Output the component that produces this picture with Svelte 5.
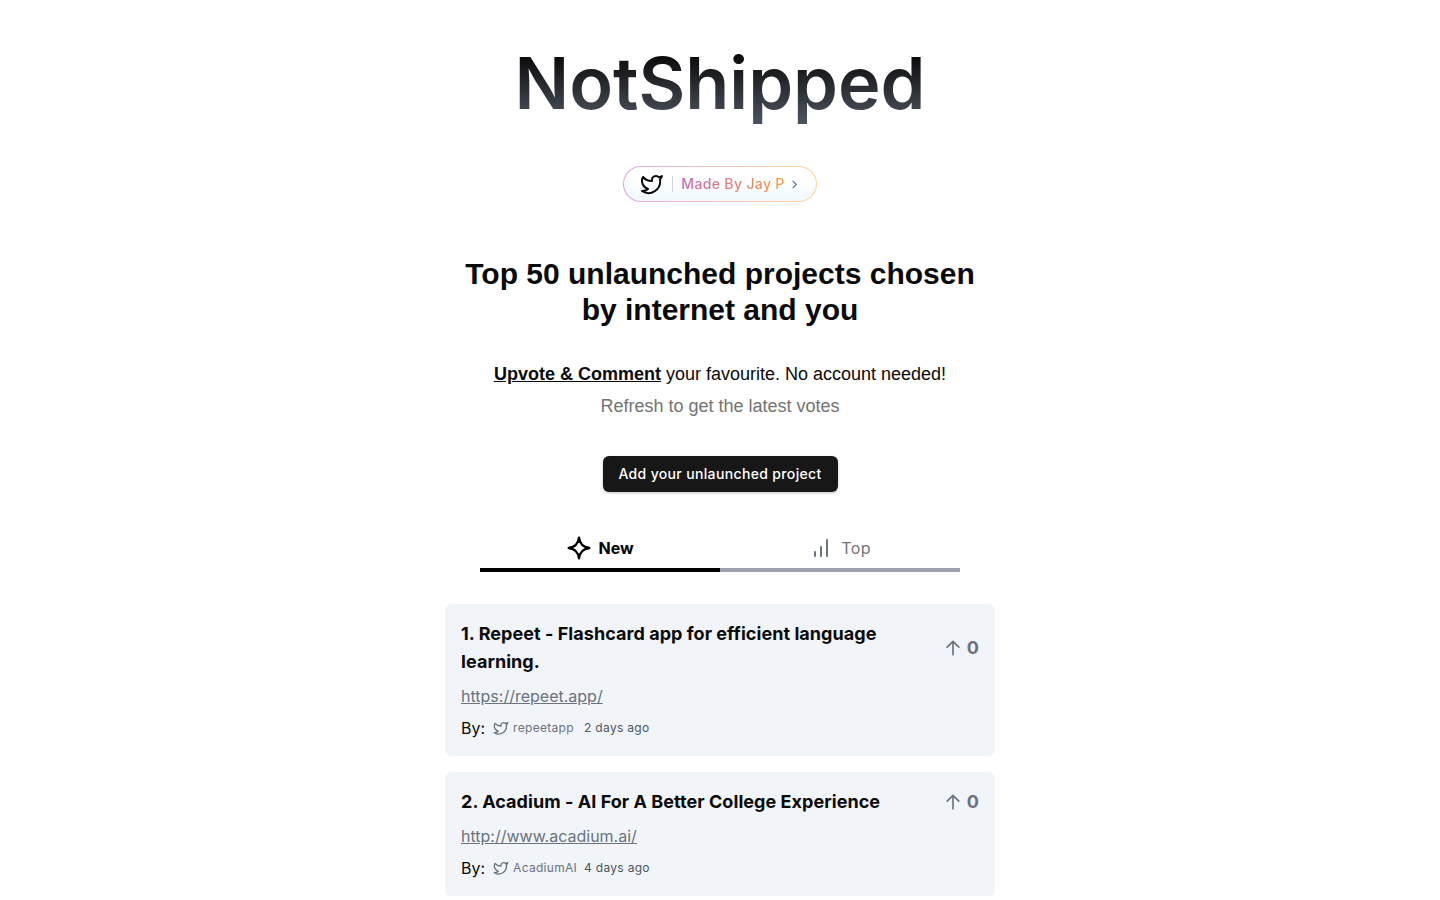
<script lang="ts">
	const projects = [
		{ rank: 1, title: 'Repeet - Flashcard app for efficient language learning.', url: 'https://repeet.app/', by: 'repeetapp', when: '2 days ago', votes: 0 },
		{ rank: 2, title: 'Acadium - AI For A Better College Experience', url: 'http://www.acadium.ai/', by: 'AcadiumAI', when: '4 days ago', votes: 0 }
	];
	const twitter = 'M22 4s-.7 2.1-2 3.4c1.6 10-9.4 17.3-18 11.6 2.2.1 4.4-.6 6-2C3 15.5.5 9.6 3 5c2.2 2.6 5.6 4.1 9 4-.9-4.2 4-6.6 7-3.8 1.1 0 3-1.2 3-1.2z';
</script>

<main class="page">
	<h1 class="title">NotShipped</h1>

	<a class="maker" href="#maker">
		<svg class="maker-bird" viewBox="0 0 24 24" width="24" height="24" aria-hidden="true"><path d={twitter} /></svg>
		<span class="maker-sep"></span>
		<span class="maker-text">Made By Jay P</span>
		<svg class="maker-chevron" viewBox="3 3 18 18" width="11" height="11" aria-hidden="true"><path d="m9 6 6 6-6 6" /></svg>
	</a>

	<h2 class="headline">Top 50 unlaunched projects chosen by internet and you</h2>

	<p class="lead"><a href="#comment">Upvote &amp; Comment</a> your favourite. No account needed!</p>
	<p class="sub">Refresh to get the latest votes</p>

	<button class="add" type="button">Add your unlaunched project</button>

	<div class="tabs">
		<button class="tab active" type="button">
			<svg viewBox="0 0 24 24" width="26" height="26" aria-hidden="true"><path d="M12 2.500c.9 6 3.500 8.600 9.500 9.500-6 .9-8.600 3.500-9.500 9.500-.9-6-3.500-8.600-9.500-9.500 6-.9 8.600-3.500 9.500-9.500z" /></svg>
			New
		</button>
		<button class="tab" type="button">
			<svg viewBox="0 0 24 24" width="24" height="24" aria-hidden="true"><path d="M18 20V4M12 20v-9M6 20v-4" /></svg>
			Top
		</button>
	</div>

	<ul class="list">
		{#each projects as p}
			<li class="card">
				<div class="card-top">
					<h3>{p.rank}. {p.title}</h3>
					<button class="vote" type="button">
						<svg viewBox="0 0 24 24" width="20" height="20" aria-hidden="true"><path d="M12 20V4M5 11l7-7 7 7" /></svg>
						{p.votes}
					</button>
				</div>
				<a class="url" href={p.url}>{p.url}</a>
				<div class="meta">
					<span class="by">By:</span>
					<svg class="meta-bird" viewBox="0 0 24 24" width="16" height="16" aria-hidden="true"><path d={twitter} /></svg>
					<span class="handle">{p.by}</span>
					<span class="when">{p.when}</span>
				</div>
			</li>
		{/each}
	</ul>
</main>

<style>
	:global(body) {
		margin: 0;
		background: #fff;
		font-family: Inter, sans-serif;
		color: #0a0a0a;
	}

	.page {
		display: flex;
		flex-direction: column;
		align-items: center;
		padding-top: 39px;
	}

	.title {
		margin: 0;
		font-size: 72px;
		line-height: 88px;
		font-weight: 600;
		background: linear-gradient(to bottom, #0a0a0a 18%, #40454f 80%, #4b5563);
		-webkit-background-clip: text;
		background-clip: text;
		color: transparent;
	}

	.maker {
		display: flex;
		align-items: center;
		box-sizing: border-box;
		height: 36px;
		margin-top: 39px;
		padding: 0 16px;
		border: 1px solid transparent;
		border-radius: 18px;
		background:
			linear-gradient(to bottom, #fff 30%, #f0f9ff) padding-box,
			linear-gradient(to right, #dba7df, #f5c6c0, #fdd69a) border-box;
		text-decoration: none;
	}

	.maker-bird {
		fill: none;
		stroke: #0a0a0a;
		stroke-width: 2;
		stroke-linejoin: round;
		stroke-linecap: round;
	}

	.maker-sep {
		width: 1px;
		height: 16px;
		margin: 0 8px;
		background: #d1d5db;
	}

	.maker-text {
		font-size: 14px;
		line-height: 18px;
		margin-top: -1px;
		font-weight: 500;
		letter-spacing: 0.35px;
		background: linear-gradient(to right, #c466b8, #f59e3b);
		-webkit-background-clip: text;
		background-clip: text;
		color: transparent;
	}

	.maker-chevron {
		margin-left: 4px;
		fill: none;
		stroke: #6b7280;
		stroke-width: 2;
	}

	.headline {
		width: 550px;
		margin: 54px 0 0;
		font-family: 'Liberation Sans', Arial, sans-serif;
		font-size: 30px;
		line-height: 36px;
		font-weight: 700;
		text-align: center;
	}

	.lead {
		margin: 28px 0 0;
		font-family: 'Liberation Sans', Arial, sans-serif;
		font-size: 18px;
		line-height: 36px;
		text-align: center;
	}

	.lead a {
		color: inherit;
		font-weight: 700;
	}

	.sub {
		margin: 0;
		font-family: 'Liberation Sans', Arial, sans-serif;
		font-size: 18px;
		line-height: 28px;
		color: #737373;
	}

	.add {
		box-sizing: border-box;
		width: 235px;
		height: 36px;
		margin-top: 36px;
		padding: 0;
		border: 0;
		border-radius: 6px;
		background: #171717;
		color: #fff;
		font: 500 14px/20px Inter, sans-serif;
		letter-spacing: 0.35px;
		box-shadow: 0 1px 3px rgba(0, 0, 0, 0.25);
	}

	.tabs {
		display: grid;
		grid-template-columns: 1fr 1fr;
		width: 480px;
		margin-top: 36px;
	}

	.tab {
		display: flex;
		align-items: center;
		justify-content: center;
		gap: 8px;
		height: 44px;
		padding: 0;
		border: 0;
		border-bottom: 4px solid #9ca3af;
		background: none;
		color: #737373;
		font: 400 16px/24px Inter, sans-serif;
		letter-spacing: 0.4px;
	}

	.tab svg {
		fill: none;
		stroke: #6b7280;
		stroke-width: 2;
		stroke-linecap: round;
	}

	.tab.active {
		gap: 6px;
		border-bottom-color: #000;
		color: #000;
		font-weight: 700;
		letter-spacing: 0;
	}

	.tab.active svg {
		stroke: #000;
		stroke-width: 2.2;
		stroke-linejoin: round;
	}

	.list {
		display: flex;
		flex-direction: column;
		gap: 16px;
		width: 550px;
		margin: 32px 0 0;
		padding: 0;
		list-style: none;
	}

	.card {
		padding: 16px;
		border-radius: 6px;
		background: #f1f5f9;
	}

	.card-top {
		display: flex;
		align-items: center;
		justify-content: space-between;
		gap: 48px;
	}

	.card h3 {
		margin: 0;
		font-size: 18px;
		line-height: 28px;
		font-weight: 700;
		letter-spacing: 0.05px;
	}

	.vote {
		display: flex;
		align-items: center;
		gap: 4px;
		flex: none;
		padding: 0;
		border: 0;
		background: none;
		color: #6b7280;
		font: 700 18px/28px Inter, sans-serif;
	}

	.vote svg {
		fill: none;
		stroke: #6b7280;
		stroke-width: 2;
		stroke-linecap: round;
		stroke-linejoin: round;
	}

	.url {
		display: block;
		margin-top: 8px;
		color: #6b7280;
		font-size: 16px;
		line-height: 24px;
	}

	.meta {
		display: flex;
		align-items: center;
		margin-top: 8px;
		height: 24px;
	}

	.by {
		margin-right: 8px;
		font-size: 16px;
	}

	.meta-bird {
		margin-right: 4px;
		fill: none;
		stroke: #6b7280;
		stroke-width: 2;
		stroke-linejoin: round;
	}

	.handle {
		width: 63px;
		margin: -1px 8px 0 0;
		color: #6b7280;
		font-size: 12px;
		letter-spacing: 0.3px;
		white-space: nowrap;
	}

	.when {
		margin-top: -1px;
		color: #4b5563;
		font-size: 12px;
		letter-spacing: 0.3px;
	}
</style>
